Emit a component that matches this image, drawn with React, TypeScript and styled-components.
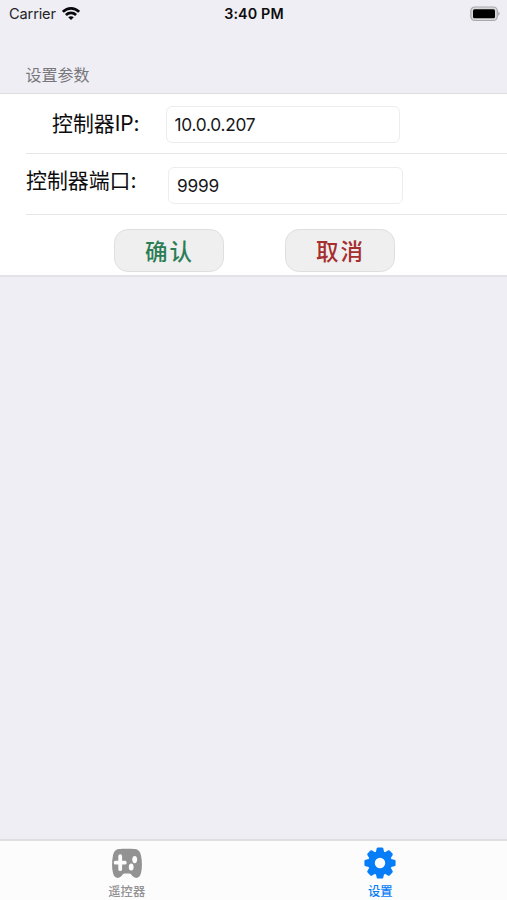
import React, { useState } from 'react';
import styled, { createGlobalStyle } from 'styled-components';

const GlobalStyle = createGlobalStyle`
  * { box-sizing: border-box; }
  body {
    margin: 0;
    background: #efeef4;
    font-family: Inter, "Noto Sans CJK SC", sans-serif;
    color: #0c0c0e;
  }
`;

const Screen = styled.div`
  width: 507px;
  height: 900px;
  display: flex;
  flex-direction: column;
  background: #efeef4;
  overflow: hidden;
`;

const StatusBar = styled.header`
  height: 27px;
  flex: none;
  display: grid;
  grid-template-columns: 1fr auto 1fr;
  align-items: center;
  padding: 0 6px 0 9px;
  font-size: 14.6px;
`;

const Carrier = styled.div`
  display: flex;
  align-items: center;
  gap: 6px;
  color: #242427;
`;

const CarrierName = styled.span`
  letter-spacing: -0.15px;
`;

const Clock = styled.time`
  margin-left: -2px;
  font-size: 14.3px;
  font-weight: 600;
  letter-spacing: 0.15px;
`;

const BatteryIcon = styled.svg`
  justify-self: end;
`;

const SectionTitle = styled.h1`
  margin: 0;
  height: 66px;
  flex: none;
  padding: 37px 0 0 25.5px;
  font-size: 16px;
  line-height: 22px;
  font-weight: 400;
  color: #77777b;
`;

const Form = styled.form`
  flex: none;
  height: 184px;
  padding-left: 26px;
  background: #fff;
  border-top: 1px solid #dddde0;
  border-bottom: 2px solid #e3e3e7;
`;

const FieldRow = styled.label<{ $labelInset: number; $fieldStart: number; $lift: number }>`
  height: ${p => (p.$labelInset ? 60 : 61)}px;
  display: grid;
  grid-template-columns: ${p => p.$fieldStart}px auto;
  align-items: start;
  border-bottom: 1px solid #e7e7e9;
  padding-top: ${p => (p.$labelInset ? 12 : 13)}px;

  & > span {
    padding-left: ${p => p.$labelInset}px;
    margin-top: ${p => p.$lift}px;
  }
`;

const LabelText = styled.span`
  font-size: 20.9px;
  line-height: 30px;
  font-feature-settings: "calt" 0;
  white-space: nowrap;
`;

const TextField = styled.input`
  width: 234.5px;
  height: 37px;
  padding: 0 8px;
  border: 1px solid #ededee;
  border-radius: 6px;
  background: #fff;
  font: 17.3px Inter, sans-serif;
  letter-spacing: -0.25px;
  color: #171719;
  outline: none;
`;

const Actions = styled.div`
  display: flex;
  gap: 61px;
  padding: 14px 0 0 87.5px;
`;

const ActionButton = styled.button<{ $color: string }>`
  width: 110px;
  height: 43px;
  padding: 0 0 1px 2px;
  border: 1px solid #dfdfdf;
  border-radius: 14px;
  background: #efefef;
  color: ${p => p.$color};
  font: 500 22.5px "Noto Sans CJK SC", sans-serif;
  letter-spacing: 2px;
`;

const TabBar = styled.nav`
  height: 61px;
  flex: none;
  margin-top: auto;
  display: grid;
  grid-template-columns: 1fr 1fr;
  background: #fcfcfd;
  border-top: 2px solid #dfdfe2;
`;

const Tab = styled.button<{ $active: boolean }>`
  display: flex;
  flex-direction: column;
  align-items: center;
  padding: 6px 0 0;
  border: 0;
  background: none;
  color: ${p => (p.$active ? '#087df8' : '#929292')};
  font: 500 12.3px/18px "Noto Sans CJK SC", sans-serif;
`;

const TabLabel = styled.span`
  margin-top: 3px;
`;

const WifiIcon = () => (
  <svg width="18" height="14" viewBox="0 0 18 14" fill="none" stroke="#08080a" strokeWidth="2.6">
    <path d="M.9 4.8C5.6.2 12.4.2 17.1 4.8" />
    <path d="M3.9 8C6.8 5.2 11.2 5.2 14.1 8" />
    <path d="M6.2 10.2C7.9 8.8 10.1 8.8 11.8 10.2L9 13Z" fill="#08080a" stroke="none" />
  </svg>
);

const GamepadIcon = () => (
  <svg width="32" height="32" viewBox="0 0 32 32">
    <path
      fill="currentColor"
      d="M8 2C11 1.5 21 1.5 24 2C28 2.6 29.3 5 30.1 9C31.1 14 31.4 21 30 26C28.8 31 25.2 32 22.4 29.8C20.6 28.2 20 26.4 18.3 26.4H13.7C12 26.4 11.4 28.2 9.6 29.8C6.8 32 3.2 31 2 26C.6 21 .9 14 1.9 9C2.7 5 4 2.6 8 2Z"
    />
    <path d="M9.2 9.2V22.2M4.6 15.7H13.8" stroke="#fcfcfd" strokeWidth="3.8" strokeLinecap="round" />
    <ellipse cx="23.7" cy="12.6" rx="2.4" ry="3.6" fill="#fcfcfd" />
    <ellipse cx="20.2" cy="20" rx="2.4" ry="3.6" fill="#fcfcfd" />
  </svg>
);

const GearIcon = () => (
  <svg width="32" height="32" viewBox="0 0 32 32" fill="currentColor">
    {[0, 45, 90, 135, 180, 225, 270, 315].map(angle => (
      <path key={angle} d="M11.4 7L12.7 1.6Q13 .4 14 .4H18Q19 .4 19.3 1.6L20.6 7Z" transform={`rotate(${angle} 16 16)`} />
    ))}
    <circle cx="16" cy="16" r="8.6" fill="none" stroke="currentColor" strokeWidth="6.8" />
  </svg>
);

export default function App() {
  const [host, setHost] = useState('10.0.0.207');
  const [port, setPort] = useState('9999');

  return (
    <Screen>
      <GlobalStyle />
      <StatusBar>
        <Carrier>
          <CarrierName>Carrier</CarrierName>
          <WifiIcon />
        </Carrier>
        <Clock>3:40 PM</Clock>
        <BatteryIcon width="31" height="16" viewBox="0 0 31 16">
          <rect x=".8" y="1" width="26.5" height="13.5" rx="4" fill="#d8d8da" stroke="#a9a9ab" strokeWidth="1.2" />
          <rect x="3" y="3.2" width="22" height="9" rx="1.5" fill="#000" />
          <path d="M28.3 5.5Q31 7.7 28.3 10Z" fill="#a0a0a2" />
        </BatteryIcon>
      </StatusBar>
      <SectionTitle>设置参数</SectionTitle>
      <Form onSubmit={e => e.preventDefault()}>
        <FieldRow $labelInset={26} $fieldStart={139.5} $lift={3}>
          <LabelText>控制器IP:</LabelText>
          <TextField value={host} onChange={e => setHost(e.target.value)} />
        </FieldRow>
        <FieldRow $labelInset={0} $fieldStart={142} $lift={-1}>
          <LabelText>控制器端口:</LabelText>
          <TextField value={port} onChange={e => setPort(e.target.value)} />
        </FieldRow>
        <Actions>
          <ActionButton type="submit" $color="#2c7d55">确认</ActionButton>
          <ActionButton type="button" $color="#a52e2e">取消</ActionButton>
        </Actions>
      </Form>
      <TabBar>
        <Tab $active={false}>
          <GamepadIcon />
          <TabLabel>遥控器</TabLabel>
        </Tab>
        <Tab $active>
          <GearIcon />
          <TabLabel>设置</TabLabel>
        </Tab>
      </TabBar>
    </Screen>
  );
}
